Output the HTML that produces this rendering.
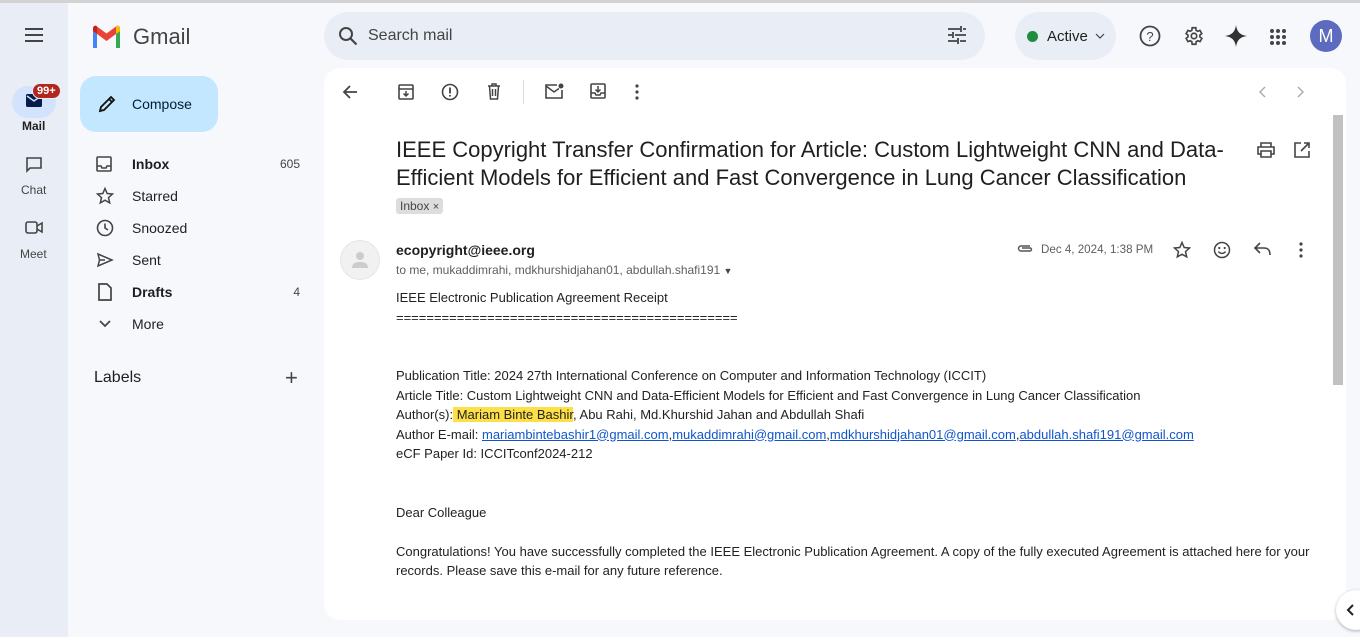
<!DOCTYPE html>
<html><head><meta charset="utf-8"><style>
*{box-sizing:border-box;margin:0;padding:0}
body{width:1360px;height:637px;overflow:hidden;background:#f6f8fc;font-family:"Liberation Sans",Arial,sans-serif;color:#1f1f1f;position:relative}
.abs{position:absolute}
.rail{left:0;top:0;width:68px;height:637px;background:#e9eef6}
.topline{left:0;top:0;width:1360px;height:3px;background:#d3d3d3}
.nav{font-size:14px;color:#1f1f1f}
.navrow{position:absolute;left:96px;height:32px;display:flex;align-items:center;width:204px}
.navrow span.t{margin-left:20px}
.navrow span.c{margin-left:auto;font-size:12px;color:#444}
.card{left:324px;top:68px;width:1022px;height:552px;background:#fff;border-radius:16px}
.ic{position:absolute}
.body{font-size:13px;color:#222;line-height:19.5px}
a{color:#1155cc;text-decoration:underline}
</style></head><body>
<div class="abs rail"></div>
<div class="abs topline"></div>
<svg class="ic" style="left:24px;top:27px" width="20" height="16"><path d="M1 2h18M1 8h18M1 14h18" stroke="#444" stroke-width="2"/></svg>
<svg class="ic" style="left:91px;top:25px" width="31" height="23" viewBox="0 0 31 23">
<path d="M2 23V6l4 3v14z" fill="#4285f4"/><path d="M25 23V9l4-3v17z" fill="#34a853"/>
<path d="M2 6l13.5 10L29 6V3.5C29 1 26.5 0 25 1.5L15.5 8.5 6 1.5C4.5 0 2 1 2 3.5z" fill="#ea4335"/>
<path d="M25 9l4-3V3.5C29 1 26.5 0 25 1.5z" fill="#fbbc04"/><path d="M2 6l4 3V1.5C4.5 0 2 1 2 3.5z" fill="#c5221f"/></svg>
<div class="abs" style="left:133px;top:24px;font-size:22px;color:#444">Gmail</div>
<div class="abs" style="left:12px;top:86px;width:44px;height:32px;border-radius:16px;background:#d3e3fd"></div>
<svg class="ic" style="left:26px;top:94px" width="16" height="13"><rect width="16" height="13" rx="1.5" fill="#041e49"/><path d="M1 2l7 5 7-5" stroke="#d3e3fd" stroke-width="1.4" fill="none"/></svg>
<div class="abs" style="left:32px;top:83px;background:#b3261e;color:#fff;font-size:11px;font-weight:bold;border-radius:8px;padding:1px 4px;border:1px solid #e9eef6">99+</div>
<div class="abs" style="left:22px;top:119px;font-size:12px;font-weight:bold;color:#1f1f1f">Mail</div>
<svg class="ic" style="left:25px;top:156px" width="18" height="18"><path d="M2 2h14v10H5l-3 3z" fill="none" stroke="#444" stroke-width="1.6"/></svg>
<div class="abs" style="left:21px;top:183px;font-size:12px;color:#444">Chat</div>
<svg class="ic" style="left:25px;top:221px" width="18" height="14"><rect x="1" y="1" width="11" height="11" rx="2" fill="none" stroke="#444" stroke-width="1.6"/><path d="M12 5l5-3v9l-5-3" fill="none" stroke="#444" stroke-width="1.6"/></svg>
<div class="abs" style="left:20px;top:247px;font-size:12px;color:#444">Meet</div>
<div class="abs" style="left:80px;top:76px;width:138px;height:56px;border-radius:16px;background:#c2e7ff"></div>
<svg class="ic" style="left:97px;top:94px" width="20" height="20"><path d="M3 17l1-4L14 3l3 3L7 16z M12 5l3 3" fill="none" stroke="#111" stroke-width="1.8"/></svg>
<div class="abs" style="left:132px;top:96px;font-size:14px;color:#001d35">Compose</div>
<div class="nav">
<div class="navrow" style="top:148px"><svg width="16" height="16"><rect x="1" y="1" width="14" height="14" rx="1" fill="none" stroke="#444" stroke-width="1.6"/><path d="M1 10h4l1 2h4l1-2h4" fill="none" stroke="#444" stroke-width="1.6"/></svg><span class="t" style="font-weight:bold">Inbox</span><span class="c">605</span></div>
<div class="navrow" style="top:180px"><svg width="18" height="18"><path d="M9 1.5l2.2 5 5.3.5-4 3.6 1.2 5.3L9 13.2l-4.7 2.7 1.2-5.3-4-3.6 5.3-.5z" fill="none" stroke="#444" stroke-width="1.5"/></svg><span class="t" style="margin-left:18px">Starred</span></div>
<div class="navrow" style="top:212px"><svg width="18" height="18"><circle cx="9" cy="9" r="7.5" fill="none" stroke="#444" stroke-width="1.6"/><path d="M9 4.5V9l3 2" fill="none" stroke="#444" stroke-width="1.6"/></svg><span class="t" style="margin-left:18px">Snoozed</span></div>
<div class="navrow" style="top:244px"><svg width="18" height="16"><path d="M2 2l14 6-14 6 1.5-6z M3.5 8H9" fill="none" stroke="#444" stroke-width="1.5"/></svg><span class="t" style="margin-left:18px">Sent</span></div>
<div class="navrow" style="top:276px"><svg width="18" height="18"><path d="M3 1h8l4 4v12H3z" fill="none" stroke="#444" stroke-width="1.7"/></svg><span class="t" style="font-weight:bold;margin-left:18px">Drafts</span><span class="c">4</span></div>
<div class="navrow" style="top:308px"><svg width="18" height="18"><path d="M4 6l5 5 5-5" fill="none" stroke="#444" stroke-width="1.7"/></svg><span class="t" style="margin-left:18px">More</span></div>
</div>
<div class="abs" style="left:94px;top:369px;font-size:16px;color:#1f1f1f">Labels</div>
<div class="abs" style="left:285px;top:365px;font-size:22px;color:#444;font-weight:300">+</div>
<div class="abs" style="left:324px;top:12px;width:661px;height:48px;border-radius:24px;background:#e9eef6"></div>
<svg class="ic" style="left:338px;top:26px" width="20" height="20"><circle cx="8" cy="8" r="6" fill="none" stroke="#444" stroke-width="2"/><path d="M12.5 12.5l6 6" stroke="#444" stroke-width="2.2"/></svg>
<div class="abs" style="left:368px;top:27px;font-size:16px;color:#444">Search mail</div>
<svg class="ic" style="left:947px;top:26px" width="20" height="18"><path d="M1 3h12M16 3h3M1 9h4M8 9h11M1 15h9M13 15h6M14 0v6M6 6v6M11 12v6" stroke="#444" stroke-width="1.8"/></svg>
<div class="abs" style="left:1015px;top:12px;width:101px;height:48px;border-radius:24px;background:#e9eef6"></div>
<div class="abs" style="left:1027px;top:31px;width:11px;height:11px;border-radius:50%;background:#1e8e3e"></div>
<div class="abs" style="left:1047px;top:28px;font-size:15px;color:#1f1f1f">Active</div>
<svg class="ic" style="left:1095px;top:33px" width="10" height="6"><path d="M1 1l4 4 4-4" fill="none" stroke="#444" stroke-width="1.2"/></svg>
<svg class="ic" style="left:1139px;top:25px" width="22" height="22"><circle cx="11" cy="11" r="9.5" fill="none" stroke="#444" stroke-width="1.8"/><text x="11" y="16" font-size="13" text-anchor="middle" fill="#444" font-family="Liberation Sans">?</text></svg>
<svg class="ic" style="left:1183px;top:25px" width="22" height="22" viewBox="0 0 24 24"><path d="M19.4 13a7.5 7.5 0 000-2l2.1-1.6-2-3.5-2.5 1a7 7 0 00-1.7-1L15 3h-4l-.4 2.9a7 7 0 00-1.7 1l-2.5-1-2 3.5L6.5 11a7.5 7.5 0 000 2l-2.1 1.6 2 3.5 2.5-1a7 7 0 001.7 1L11 21h4l.4-2.9a7 7 0 001.7-1l2.5 1 2-3.5z" transform="translate(-1 0)" fill="none" stroke="#444" stroke-width="1.8"/><circle cx="12" cy="12" r="3" fill="none" stroke="#444" stroke-width="1.8"/></svg>
<svg class="ic" style="left:1225px;top:25px" width="22" height="22"><path d="M11 0C12 7 15 10 22 11 15 12 12 15 11 22 10 15 7 12 0 11 7 10 10 7 11 0z" fill="#333"/></svg>
<svg class="ic" style="left:1269px;top:28px" width="18" height="18"><g fill="#444"><circle cx="3" cy="3" r="2"/><circle cx="9" cy="3" r="2"/><circle cx="15" cy="3" r="2"/><circle cx="3" cy="9" r="2"/><circle cx="9" cy="9" r="2"/><circle cx="15" cy="9" r="2"/><circle cx="3" cy="15" r="2"/><circle cx="9" cy="15" r="2"/><circle cx="15" cy="15" r="2"/></g></svg>
<div class="abs" style="left:1310px;top:20px;width:32px;height:32px;border-radius:50%;background:#5c6bc0;color:#fff;font-size:18px;text-align:center;line-height:32px">M</div>
<div class="abs card"></div>
<div class="abs" style="left:1333px;top:115px;width:10px;height:270px;background:#c1c1c1"></div>
<svg class="ic" style="left:342px;top:84px" width="16" height="16"><path d="M15 8H2M8 2L2 8l6 6" fill="none" stroke="#444" stroke-width="1.8"/></svg>
<svg class="ic" style="left:398px;top:84px" width="16" height="16"><rect x="1" y="1" width="14" height="14" rx="1" fill="none" stroke="#444" stroke-width="1.6"/><path d="M1 5h14M8 7v5M5.5 9.5L8 12l2.5-2.5" fill="none" stroke="#444" stroke-width="1.5"/></svg>
<svg class="ic" style="left:441px;top:83px" width="18" height="18"><circle cx="9" cy="9" r="7.5" fill="none" stroke="#444" stroke-width="1.6"/><path d="M9 4.5v6M9 12v1.5" stroke="#444" stroke-width="1.8"/></svg>
<svg class="ic" style="left:487px;top:83px" width="14" height="17"><path d="M1 3h12M5 3V1h4v2M2.5 3l1 13h7l1-13M5.5 6v7M8.5 6v7" fill="none" stroke="#444" stroke-width="1.5"/></svg>
<div class="abs" style="left:523px;top:80px;width:1px;height:24px;background:#ddd"></div>
<svg class="ic" style="left:545px;top:83px" width="19" height="16"><path d="M12 2H1v13h16V7" fill="none" stroke="#444" stroke-width="1.6"/><path d="M1 3l8 6 5-3.5" fill="none" stroke="#444" stroke-width="1.5"/><circle cx="16" cy="3" r="2.5" fill="#444"/></svg>
<svg class="ic" style="left:590px;top:83px" width="16" height="16"><rect x="1" y="1" width="14" height="14" rx="1" fill="none" stroke="#444" stroke-width="1.6"/><path d="M1 10h4l1 2h4l1-2h4M8 3v6M5.5 6.5L8 9l2.5-2.5" fill="none" stroke="#444" stroke-width="1.5"/></svg>
<svg class="ic" style="left:635px;top:84px" width="4" height="16"><g fill="#444"><circle cx="2" cy="2" r="1.6"/><circle cx="2" cy="8" r="1.6"/><circle cx="2" cy="14" r="1.6"/></g></svg>
<svg class="ic" style="left:1258px;top:86px" width="8" height="12"><path d="M7 1L2 6l5 5" fill="none" stroke="#aaa" stroke-width="1.4"/></svg>
<svg class="ic" style="left:1297px;top:86px" width="8" height="12"><path d="M1 1l5 5-5 5" fill="none" stroke="#aaa" stroke-width="1.4"/></svg>
<div class="abs" style="left:396px;top:136px;width:850px;font-size:22px;line-height:28px;color:#1f1f1f">IEEE Copyright Transfer Confirmation for Article: Custom Lightweight CNN and Data-Efficient Models for Efficient and Fast Convergence in Lung Cancer Classification</div>
<div class="abs" style="left:396px;top:198px;background:#ddd;font-size:12px;color:#444;padding:1px 4px;border-radius:3px">Inbox <span style="font-size:11px">×</span></div>
<svg class="ic" style="left:1257px;top:142px" width="18" height="16"><path d="M4 5V1h10v4M4 12H1V5h16v7h-3M4 9h10v6H4z" fill="none" stroke="#444" stroke-width="1.6"/></svg>
<svg class="ic" style="left:1294px;top:142px" width="16" height="16"><path d="M7 1H1v14h14V9M10 1h5v5M15 1L7 9" fill="none" stroke="#444" stroke-width="1.6"/></svg>
<div class="abs" style="left:340px;top:240px;width:40px;height:40px;border-radius:50%;background:#f1f1f1;border:1px solid #e6e6e6"></div>
<svg class="ic" style="left:352px;top:251px" width="16" height="18"><circle cx="8" cy="5" r="4" fill="#ccc"/><path d="M0 17c0-5 4-6 8-6s8 1 8 6z" fill="#ccc"/></svg>
<div class="abs" style="left:396px;top:242px;font-size:14px;font-weight:bold;color:#1f1f1f">ecopyright@ieee.org</div>
<div class="abs" style="left:396px;top:263px;font-size:12px;color:#5e5e5e">to me, mukaddimrahi, mdkhurshidjahan01, abdullah.shafi191 <span style="font-size:9px;color:#444">▼</span></div>
<svg class="ic" style="left:1016px;top:243px" width="18" height="10"><path d="M14 3H5a2.5 2.5 0 000 5h9a1.5 1.5 0 000-3H6" fill="none" stroke="#555" stroke-width="1.4"/></svg>
<div class="abs" style="left:1041px;top:243px;font-size:11.6px;color:#5e5e5e">Dec 4, 2024, 1:38 PM</div>
<svg class="ic" style="left:1173px;top:241px" width="18" height="18"><path d="M9 1.5l2.2 5 5.3.5-4 3.6 1.2 5.3L9 13.2l-4.7 2.7 1.2-5.3-4-3.6 5.3-.5z" fill="none" stroke="#444" stroke-width="1.5"/></svg>
<svg class="ic" style="left:1213px;top:241px" width="18" height="18"><circle cx="9" cy="9" r="7.5" fill="none" stroke="#444" stroke-width="1.5"/><circle cx="6.3" cy="7" r="1.1" fill="#444"/><circle cx="11.7" cy="7" r="1.1" fill="#444"/><path d="M5.5 10.5c1.5 2.5 5.5 2.5 7 0" fill="none" stroke="#444" stroke-width="1.4"/></svg>
<svg class="ic" style="left:1254px;top:242px" width="17" height="14"><path d="M6 1L1 6l5 5M1 6h9c4 0 6 2 6 7" fill="none" stroke="#444" stroke-width="1.6"/></svg>
<svg class="ic" style="left:1299px;top:242px" width="4" height="16"><g fill="#444"><circle cx="2" cy="2" r="1.6"/><circle cx="2" cy="8" r="1.6"/><circle cx="2" cy="14" r="1.6"/></g></svg>
<div class="abs body" style="left:396px;top:288px;width:930px">
IEEE Electronic Publication Agreement Receipt<br>
=============================================<br><br><br>
Publication Title: 2024 27th International Conference on Computer and Information Technology (ICCIT)<br>
Article Title: Custom Lightweight CNN and Data-Efficient Models for Efficient and Fast Convergence in Lung Cancer Classification<br>
Author(s):<span style="background:#fde047"> Mariam Binte Bashir</span>, Abu Rahi, Md.Khurshid Jahan and Abdullah Shafi<br>
Author E-mail: <a>mariambintebashir1@gmail.com</a>,<a>mukaddimrahi@gmail.com</a>,<a>mdkhurshidjahan01@gmail.com</a>,<a>abdullah.shafi191@gmail.com</a><br>
eCF Paper Id: ICCITconf2024-212<br><br><br>
Dear Colleague<br><br>
Congratulations! You have successfully completed the IEEE Electronic Publication Agreement. A copy of the fully executed Agreement is attached here for your records. Please save this e-mail for any future reference.
</div>
<div class="abs" style="left:1336px;top:590px;width:40px;height:40px;border-radius:50%;background:#fff;box-shadow:0 1px 3px rgba(0,0,0,.3)"></div>
<svg class="ic" style="left:1346px;top:604px" width="8" height="12"><path d="M7 1L2 6l5 5" fill="none" stroke="#222" stroke-width="2"/></svg>
</body></html>
